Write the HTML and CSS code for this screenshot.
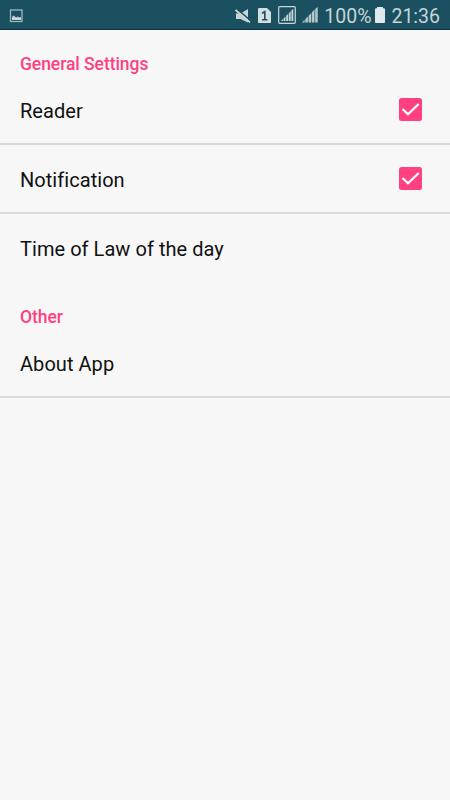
FILE: index.html
```html
<!DOCTYPE html>
<html lang="en">
<head>
    <meta charset="UTF-8">
    <meta name="viewport" content="width=device-width, initial-scale=1.0">
    <title>Settings</title>
    <link rel="stylesheet" href="styles.css">
</head>
<body>

    <!-- Status bar -->
    <div class="status-bar">
        <svg class="picture-icon" width="14" height="14" viewBox="0 0 14 14">
            <rect x="1.5" y="1" width="11.5" height="11.5" fill="none" stroke="#9db8be" stroke-width="1.3"/>
            <path d="M3 8l1.6-1.5L7 8.5l2-1 1 1L12 8v3H3z" fill="#c5d5d8"/>
        </svg>
        <div class="status-right">
            <svg class="mute-icon" width="16" height="16" viewBox="0 0 16 16">
                <path d="M1 5.5h4.5L13 1v13.5L5.5 11H1z" fill="#c5d5d8"/>
                <path d="M1 .2L16 13" stroke="#1a505f" stroke-width="1.6"/>
                <path d="M.5 2l14.5 12.4" stroke="#c5d5d8" stroke-width="1.8"/>
            </svg>
            <svg class="sim-icon" width="13" height="15" viewBox="0 0 13 15">
                <path d="M1 0h8l4 4v10q0 1-1 1H1q-1 0-1-1V1q0-1 1-1z" fill="#d3dfe1"/>
                <path d="M4 5.2l2.8-1.5v8M4 11.7h5.4" fill="none" stroke="#1a505f" stroke-width="1.6"/>
            </svg>
            <svg class="signal-box-icon" width="18" height="18" viewBox="0 0 18 18">
                <rect x=".7" y=".7" width="16.6" height="16.6" rx="1" fill="none" stroke="#c5d5d8" stroke-width="1.2"/>
                <path d="M3 15l2-2v2zM5.6 12.4l1.9-1.9V15H5.6zM8.2 9.8l1.9-1.9V15H8.2zM10.8 7.2l1.9-1.9V15h-1.9zM13.4 4.6l1.9-1.9V15h-1.9z" fill="#c5d5d8"/>
            </svg>
            <svg class="signal-icon" width="16" height="16" viewBox="0 0 16 16">
                <path d="M0 15.5l2.6-2.7v2.7zM3.3 12.1l2.6-2.7v6.1H3.3zM6.6 8.7L9.2 6v9.5H6.6zM9.9 5.3l2.6-2.7v12.9H9.9zM13.2 1.9L15.7 0v15.5h-2.5z" fill="#b5c9cd"/>
            </svg>
            <span class="percent">100%</span>
            <svg class="battery-icon" width="10" height="16" viewBox="0 0 10 16">
                <path d="M2 0h6v1.2h1q1 0 1 1V15q0 1-1 1H1q-1 0-1-1V2.2q0-1 1-1h1z" fill="#dfe8ea"/>
            </svg>
            <span class="clock">21:36</span>
        </div>
    </div>

    <!-- Settings list -->
    <div class="settings">
        <h2 class="section-title">General Settings</h2>
        <div class="row">
            <span class="label">Reader</span>
            <svg class="checkbox" width="23" height="23" viewBox="0 0 23 23">
                <rect width="23" height="23" rx="2.5" fill="#ff4081"/>
                <path d="M3.5 11l5.5 5.3L19.7 6" fill="none" stroke="#fff" stroke-width="2.2"/>
            </svg>
        </div>
        <div class="row">
            <span class="label">Notification</span>
            <svg class="checkbox" width="23" height="23" viewBox="0 0 23 23">
                <rect width="23" height="23" rx="2.5" fill="#ff4081"/>
                <path d="M3.5 11l5.5 5.3L19.7 6" fill="none" stroke="#fff" stroke-width="2.2"/>
            </svg>
        </div>
        <div class="row last">
            <span class="label">Time of Law of the day</span>
        </div>

        <h2 class="section-title">Other</h2>
        <div class="row">
            <span class="label">About App</span>
        </div>
    </div>

</body>
</html>
```
FILE: styles.css
```css
/* General styles */
body {
    font-family: Roboto, "Liberation Sans", sans-serif;
    margin: 0;
    padding: 0;
    min-height: 800px;
    background-color: #f7f7f7;
    color: #111;
}

svg {
    display: block;
    flex: none;
}

/* Status bar */
.status-bar {
    display: flex;
    align-items: center;
    justify-content: space-between;
    box-sizing: border-box;
    height: 30px;
    padding: 0 10px 0 9px;
    background-color: #1a505f;
    border-bottom: 1px solid #0b3344;
    color: #c5d5d8;
    font-size: 19.5px;
    line-height: 29px;
}

.picture-icon {
    margin-top: 3px;
}

.status-right {
    display: flex;
    align-items: center;
}

.mute-icon {
    margin-top: 2px;
}

.sim-icon {
    margin: 1px 0 0 7px;
}

.signal-box-icon {
    margin-left: 7px;
}

.signal-icon {
    margin: 1px 0 0 6px;
}

.percent {
    margin: 3px 0 0 6px;
}

.battery-icon {
    margin: 0 6px 0 4px;
}

.clock {
    margin-top: 3px;
}

/* Settings list */
.section-title {
    box-sizing: border-box;
    height: 46px;
    margin: 0;
    padding: 24px 20px 0;
    color: #ff4081;
    font-size: 17.5px;
    font-weight: 500;
    line-height: 20px;
    letter-spacing: -0.06px;
}

.row {
    display: flex;
    align-items: center;
    justify-content: space-between;
    box-sizing: border-box;
    height: 69px;
    padding: 0 28px 0 20px;
    border-bottom: 2px solid #d9d9d9;
    font-size: 20px;
    letter-spacing: 0.05px;
}

.label {
    padding-top: 2px;
}

.checkbox {
    margin-right: 0.5px;
    margin-bottom: 1px;
}

.row.last {
    border-bottom-color: transparent;
}
```
